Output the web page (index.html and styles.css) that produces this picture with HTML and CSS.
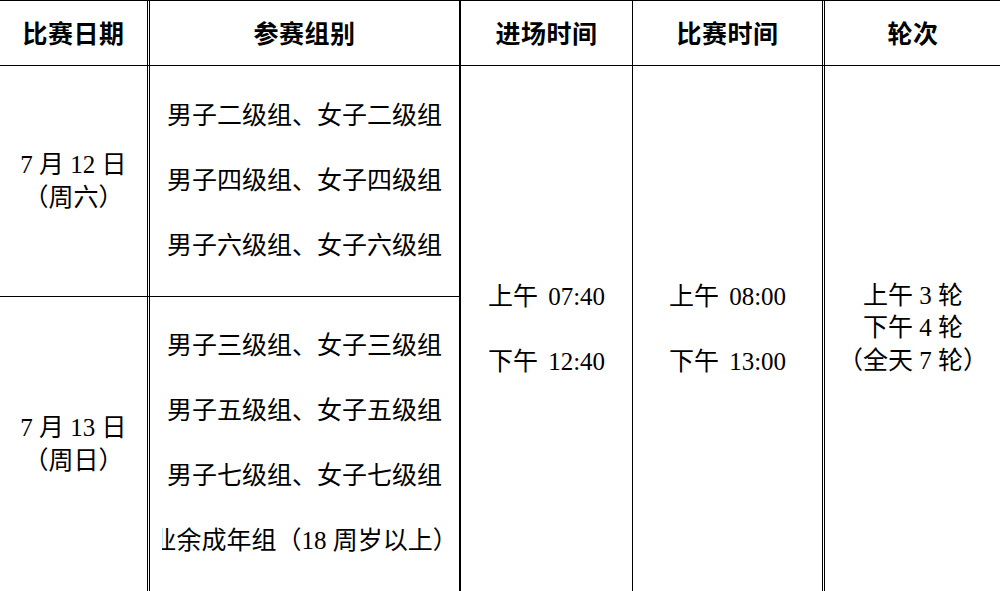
FILE: index.html
```html
<!DOCTYPE html>
<html lang="zh-CN">
<head>
<meta charset="utf-8">
<title>赛程安排</title>
<link rel="stylesheet" href="styles.css">
</head>
<body>
<div class="sheet">
  <div class="cell head c1">比赛日期</div>
  <div class="cell head c2">参赛组别</div>
  <div class="cell head c3">进场时间</div>
  <div class="cell head c4">比赛时间</div>
  <div class="cell head c5">轮次</div>

  <div class="cell date c1 r1"><div class="stack tight"><span>7 月 12 日</span><span>（周六）</span></div></div>
  <div class="cell groups c2 r1">
    <div class="line"><span>男子二级组、女子二级组</span></div>
    <div class="line"><span>男子四级组、女子四级组</span></div>
    <div class="line"><span>男子六级组、女子六级组</span></div>
  </div>

  <div class="cell span c3"><div class="stack wide"><span>上午 07:40</span><span>下午 12:40</span></div></div>
  <div class="cell span c4"><div class="stack wide"><span>上午 08:00</span><span>下午 13:00</span></div></div>
  <div class="cell span c5"><div class="stack rounds"><span>上午 3 轮</span><span>下午 4 轮</span><span>（全天 7 轮）</span></div></div>

  <div class="cell date c1 r2"><div class="stack tight"><span>7 月 13 日</span><span>（周日）</span></div></div>
  <div class="cell groups c2 r2">
    <div class="line"><span>男子三级组、女子三级组</span></div>
    <div class="line"><span>男子五级组、女子五级组</span></div>
    <div class="line"><span>男子七级组、女子七级组</span></div>
    <div class="line"><span>业余成年组（18 周岁以上）</span></div>
  </div>
</div>
</body>
</html>
```

FILE: styles.css
```css
html, body {
  margin: 0;
  padding: 0;
  background: #ffffff;
  overflow: hidden;
}

body {
  width: 1000px;
  height: 591px;
  color: #000000;
  font-family: "Liberation Serif", "Noto Sans CJK SC", serif;
  font-size: 25px;
}

.sheet {
  width: 1002px;
  display: grid;
  grid-template-columns: 150px 311px 172px 192px 177px;
  grid-template-rows: 65px 231px 295px;
  border-top: 1px solid #000;
  box-sizing: border-box;
}

.cell {
  box-sizing: border-box;
  display: flex;
  align-items: center;
  justify-content: center;
  text-align: center;
  min-width: 0;
}

.c1 { grid-column: 1; border-right: 3px double #000; }
.c2 { grid-column: 2; border-right: 2px solid #000; }
.c3 { grid-column: 3; border-right: 1px solid #000; }
.c4 { grid-column: 4; border-right: 3px double #000; }
.c5 { grid-column: 5; border-right: 1px solid #000; }

.head {
  grid-row: 1;
  border-bottom: 1px solid #000;
  font-weight: 700;
  letter-spacing: 0.5px;
  padding-bottom: 3px;
}

.r1 { grid-row: 2; border-bottom: 1px solid #000; }
.r2 { grid-row: 3; border-bottom: 1px solid #000; }
.span { grid-row: 2 / 4; border-bottom: 1px solid #000; }

.stack {
  display: flex;
  flex-direction: column;
  align-items: center;
  white-space: nowrap;
}

.tight span { line-height: 33px; }
.wide span { line-height: 65px; word-spacing: 4px; }
.rounds span { line-height: 32.5px; }

.groups {
  flex-direction: column;
  padding: 0 12px 6px;
  overflow: hidden;
}

.groups.r2 { padding-bottom: 8px; }

.line {
  width: 100%;
  height: 65px;
  display: flex;
  align-items: center;
  justify-content: center;
  overflow: hidden;
  white-space: nowrap;
}

.line span { flex: none; }
```
